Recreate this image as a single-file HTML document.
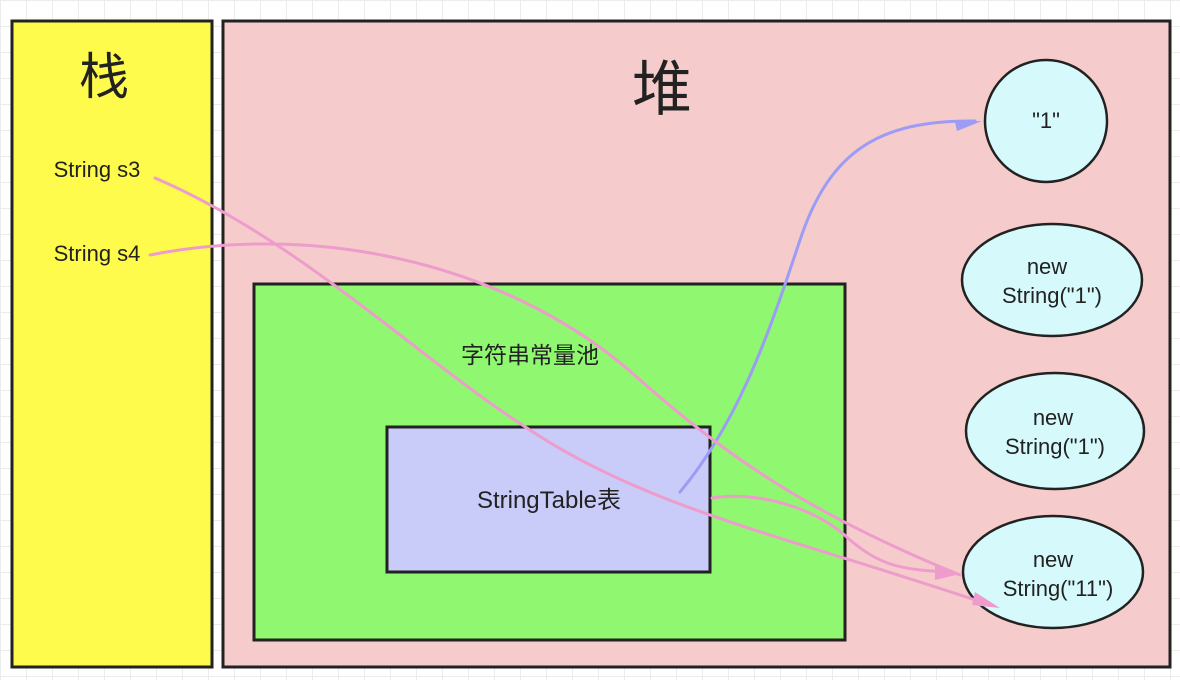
<!DOCTYPE html>
<html><head><meta charset="utf-8"><style>
body{margin:0;width:1180px;height:680px;overflow:hidden;background:#fff;
background-image:linear-gradient(#ececec 1px,transparent 1px),linear-gradient(90deg,#ececec 1px,transparent 1px);background-size:26px 26px;font-family:"Liberation Sans","Noto Sans CJK SC",sans-serif;}
</style></head><body>
<svg width="1180" height="680" style="position:absolute;left:0;top:0">
<rect x="12" y="21" width="200" height="646" fill="#fefb4c" stroke="#222" stroke-width="3"/>
<rect x="223" y="21" width="947" height="646" fill="#f5cccb" stroke="#222" stroke-width="3"/>
<rect x="254" y="284" width="591" height="356" fill="#90f770" stroke="#222" stroke-width="3"/>
<rect x="387" y="427" width="323" height="145" fill="#c9cbf8" stroke="#222" stroke-width="3"/>
<g fill="#d6fafc" stroke="#222" stroke-width="2.5">
<ellipse cx="1046" cy="121" rx="61" ry="61"/>
<ellipse cx="1052" cy="280" rx="90" ry="56"/>
<ellipse cx="1055" cy="431" rx="89" ry="58"/>
<ellipse cx="1053" cy="572" rx="90" ry="56"/>
</g>
<g font-size="22" fill="#222" text-anchor="middle">
<text x="104" y="94" font-size="50">栈</text>
<text x="662" y="110" font-size="60">堆</text>
<text x="97" y="177">String s3</text>
<text x="97" y="261">String s4</text>
<text x="530" y="363" font-size="23">字符串常量池</text>
<text x="549" y="508" font-size="24">StringTable表</text>
<text x="1046" y="128">"1"</text>
<text x="1047" y="274">new</text><text x="1052" y="303">String("1")</text>
<text x="1053" y="425">new</text><text x="1055" y="454">String("1")</text>
<text x="1053" y="567">new</text><text x="1058" y="596">String("11")</text>
</g>
<g fill="none" stroke-width="3" stroke-linecap="round">
<path d="M680 492 C740 420 770 330 800 240 C830 150 880 120 975 121" stroke="#9c9cf5"/>
<path d="M155 178 C300 240 420 360 530 430 C650 510 800 540 990 605" stroke="#ee9ccc"/>
<path d="M150 255 C330 220 520 270 640 380 C720 450 800 510 960 575" stroke="#ee9ccc"/>
<path d="M712 498 C760 490 820 510 850 540 C880 565 900 570 950 572" stroke="#ee9ccc"/>
</g>
<polygon points="955,122 982,121 957,131" fill="#9c9cf5"/>
<polygon points="935,565 960,574 935,580" fill="#ee9ccc"/>
<polygon points="975,592 1000,608 972,605" fill="#ee9ccc"/>
</svg>
</body></html>
